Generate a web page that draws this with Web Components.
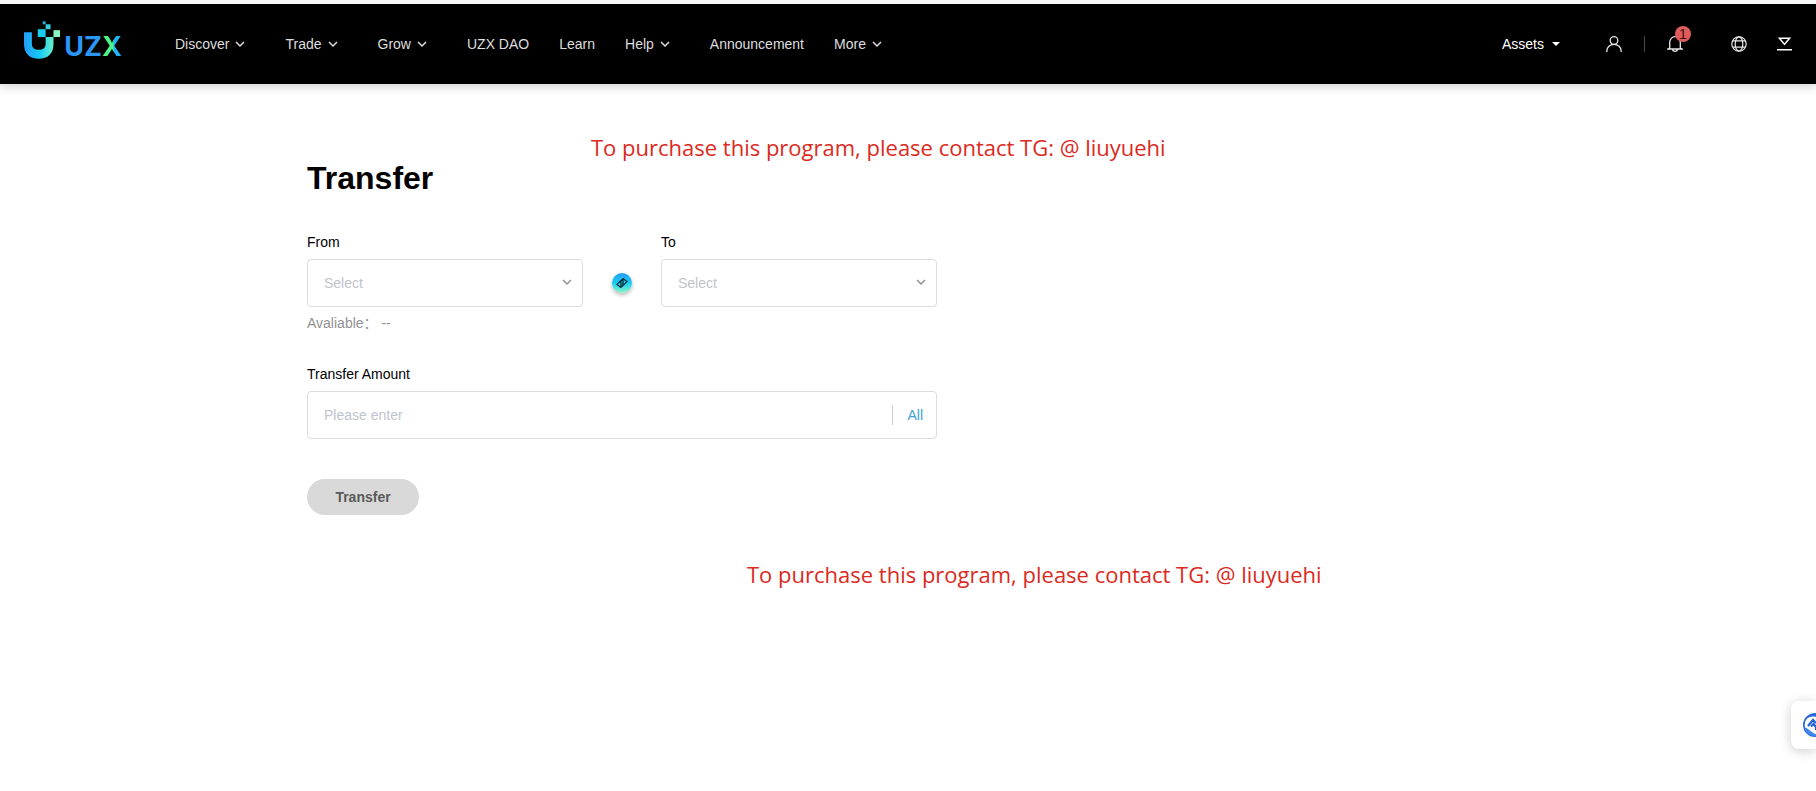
<!DOCTYPE html>
<html lang="en">
<head>
<meta charset="utf-8">
<title>Transfer - UZX</title>
<style>
html, body { margin: 0; }
body { background: #fff; font: 14px/20px "Liberation Sans", Arial, "Noto Sans CJK SC", sans-serif; color: #000; overflow-x: hidden; }
</style>
</head>
<body>
<uzx-app></uzx-app>
<script>
const define = (name, html) => customElements.define(name, class extends HTMLElement {
  constructor() {
    super();
    const t = document.createElement('template');
    t.innerHTML = html;
    this.attachShadow({ mode: 'open' }).append(t.content.cloneNode(true));
  }
});

define('uzx-logo', `
<style>
:host { display: block; flex: none; width: 98px; }
a { display: flex; align-items: flex-start; gap: 4px; height: 52px; text-decoration: none; }
svg { display: block; }
.word { display: flex; padding-top: 13px; font: 700 27px/32px Inter, sans-serif; color: #2a96f5; }
.x { background: linear-gradient(90deg, #4df58a 55%, #1fb4fa 60%); -webkit-background-clip: text; background-clip: text; color: transparent; }
</style>
<a href="#">
<svg width="37" height="44" viewBox="0 0 37 44" aria-hidden="true">
<defs><linearGradient id="g" x1="0" x2="1"><stop offset="0" stop-color="#239cf8"/><stop offset=".55" stop-color="#16cdf8"/><stop offset="1" stop-color="#6af0c8"/></linearGradient></defs>
<path d="M0 14H8V26C8 30 11 32 15 32C19 32 22 30 22 26V19H30V26C30 36 24 41 15 41C6 41 0 36 0 26Z" fill="url(#g)"/>
<path d="M14 11H22V19H14Z" fill="#19cbee"/><path d="M22 6H27V11H22Z" fill="#36cfdc"/><path d="M19 3H22V6H19Z" fill="#25b5dc"/><path d="M30 12H37V19H30Z" fill="#8af5c4"/>
</svg>
<span class="word">UZ<span class="x">X</span></span>
</a>`);

define('nav-item', `
<style>
:host { display: block; }
a { display: flex; align-items: center; gap: 6px; color: #dedede; text-decoration: none; white-space: nowrap; }
svg { display: none; margin-right: 10px; }
:host([menu]) svg { display: block; }
</style>
<a href="#"><slot></slot><svg width="10" height="8" viewBox="0 0 10 8" fill="none" stroke="#dedede" stroke-width="1.5" aria-hidden="true"><path d="M1 2L5 6L9 2"/></svg></a>`);

define('user-tools', `
<style>
:host { display: flex; align-items: center; }
a { display: flex; align-items: center; gap: 8px; color: #fff; text-decoration: none; }
button { display: block; position: relative; width: 16px; height: 16px; padding: 0; border: 0; background: none; cursor: pointer; }
button svg { display: block; fill: none; stroke: #e6e6e6; stroke-width: 1.3; }
.user { margin-left: 46px; }
i { width: 1px; height: 16px; margin: 0 22px; background: #4a4a4a; }
.globe { margin-left: 48px; }
.down { margin-left: 30px; }
.badge { position: absolute; left: 8px; top: -10px; width: 16px; height: 16px; border-radius: 8px; background: #e05c5c; color: #3a1010; font: 14px/16px "Liberation Sans", Arial, sans-serif; text-align: center; }
</style>
<a href="#">Assets<svg width="8" height="4" viewBox="0 0 8 4" aria-hidden="true"><path d="M0 0H8L4 4Z" fill="#fff"/></svg></a>
<button class="user" aria-label="Account"><svg width="16" height="16" viewBox="0 0 16 16"><circle cx="8" cy="4.5" r="3.8"/><path d="M.8 16V15A7.2 6.7 0 0 1 15.2 15V16"/></svg></button>
<i></i>
<button class="bell" aria-label="Notifications"><svg width="16" height="16" viewBox="0 0 16 16"><path d="M2.7 12V6.5A5.3 5.8 0 0 1 13.3 6.5V12L15 13H1ZM5.5 13.2C5.7 16 10.3 16 10.5 13.2"/></svg><span class="badge">1</span></button>
<button class="globe" aria-label="Language"><svg width="16" height="16" viewBox="0 0 16 16" style="stroke-width:1.2"><circle cx="8" cy="8" r="7.2"/><ellipse cx="8" cy="8" rx="3.8" ry="7.2"/><path d="M1.8 4.8H14.2M1.8 11.2H14.2"/></svg></button>
<button class="down" aria-label="Download"><svg width="16" height="16" viewBox="0 0 16 16" style="stroke:#fff;stroke-width:1.5"><path d="M2.4 2.2H12.6L7.5 8.4ZM0 13.8H15"/></svg></button>`);

define('site-header', `
<style>
:host { display: block; border-top: 4px solid #f7f7f7; box-shadow: 0 2px 10px rgba(0,0,0,.2); }
header { display: flex; align-items: center; height: 80px; padding: 0 23px 0 24px; background: #000; }
nav { display: flex; gap: 30px; margin-left: 53px; }
user-tools { margin-left: auto; }
</style>
<header>
<uzx-logo></uzx-logo>
<nav>
<nav-item menu>Discover</nav-item><nav-item menu>Trade</nav-item><nav-item menu>Grow</nav-item><nav-item>UZX DAO</nav-item><nav-item>Learn</nav-item><nav-item menu>Help</nav-item><nav-item>Announcement</nav-item><nav-item menu>More</nav-item>
</nav>
<user-tools></user-tools>
</header>`);

define('account-select', `
<style>
:host { display: block; flex: 1; }
label { display: block; margin-bottom: 7px; }
.box { display: grid; align-items: center; }
.box > * { grid-area: 1 / 1; }
select { appearance: none; box-sizing: border-box; width: 100%; height: 48px; margin: 0; padding: 0 16px; border: 1px solid #dcdcdf; border-radius: 4px; background: #fff; color: #c0c4cc; font: inherit; }
svg { justify-self: end; margin: 0 11px 2px 0; pointer-events: none; }
</style>
<label for="s"><slot></slot></label>
<div class="box"><select id="s"><option>Select</option></select>
<svg width="10" height="8" viewBox="0 0 10 8" fill="none" stroke="#8b8e95" stroke-width="1.4" aria-hidden="true"><path d="M1 2L5 6L9 2"/></svg></div>`);

define('swap-button', `
<style>
:host { display: block; }
button { display: block; width: 20px; height: 20px; padding: 0; border: 0; border-radius: 10px; background: linear-gradient(#239df6, #18cdf3 50%, #8ff5c6); box-shadow: 0 2px 4px rgba(0,0,0,.3); cursor: pointer; }
svg { display: block; }
</style>
<button aria-label="Swap accounts"><svg width="20" height="20" viewBox="0 0 20 20" fill="none" stroke="#08303c" stroke-width="1.3"><path d="M9 15V7.6L5 11.4L9 14.6M11 5V12.4L15 8.6L11 5.4M9 7.6L11 6.2M9 13.8L11 12.4"/></svg></button>`);

define('amount-field', `
<style>
:host { display: block; }
label { display: block; margin-bottom: 7px; }
.box { box-sizing: border-box; display: flex; align-items: center; height: 48px; padding-right: 13px; border: 1px solid #dcdcdf; border-radius: 4px; }
input { flex: 1; min-width: 0; padding: 0 16px; border: 0; outline: 0; background: none; font: inherit; }
input::placeholder { color: #c0c4cc; }
button { height: 20px; padding: 0 0 0 14px; border: 0; border-left: 1px solid #ccc; background: none; color: #409eda; font: inherit; cursor: pointer; }
</style>
<label for="a">Transfer Amount</label>
<div class="box"><input id="a" type="text" placeholder="Please enter"><button>All</button></div>`);

define('transfer-form', `
<style>
:host { display: block; max-width: 1202px; margin: 0 auto; }
h1 { margin: 0 0 34px; font-size: 32px; line-height: 40px; }
.form { max-width: 630px; }
.row { display: flex; align-items: flex-end; }
swap-button { margin: 0 29px 14px; }
p { margin: 6px 0 31px; color: #929292; white-space: nowrap; }
.submit { display: block; width: 112px; height: 36px; margin-top: 40px; padding: 0; border: 0; border-radius: 18px; background: #d9d9d9; color: #5a5a5a; font: bold 14px/36px "Liberation Sans", Arial, sans-serif; }
</style>
<h1>Transfer</h1>
<div class="form">
<div class="row"><account-select>From</account-select><swap-button></swap-button><account-select>To</account-select></div>
<p>Avaliable： --</p>
<amount-field></amount-field>
<button class="submit">Transfer</button>
</div>`);

define('contact-note', `
<style>
:host { position: absolute; font: 22px/32px "Open Sans", "Noto Sans", sans-serif; color: #dc2a1e; white-space: nowrap; }
</style>
<slot></slot>`);

define('side-widget', `
<style>
:host { position: fixed; right: 0; top: 701px; }
button { display: block; width: 25px; height: 48px; padding: 0 0 0 12px; border: 0; border-radius: 8px 0 0 8px; background: #fff; box-shadow: 0 2px 12px rgba(0,0,0,.2); overflow: hidden; }
svg { display: block; }
</style>
<button aria-label="Assistant"><svg width="24" height="24" viewBox="0 0 24 24" fill="none"><circle cx="12" cy="12" r="11.2" stroke="#2c68d8" stroke-width="1.6"/><path d="M1 14C7 16 9 21 17 22.5C8 25 2 20 1 14Z" fill="#3f86ee"/><path d="M3 6C6 1 12 0 17 2L13 4C9 3 6 4 3 6Z" fill="#2c68d8"/><path d="M5 13L10 7L13 10M8 13.5L10.5 11L13 14V17" stroke="#2462d4" stroke-width="2.2"/></svg></button>`);

define('uzx-app', `
<style>
:host { display: block; position: relative; }
main { padding: 74px 24px 100px; }
.first { left: 591px; top: 131px; }
.second { left: 747px; top: 558px; }
</style>
<site-header></site-header>
<main><transfer-form></transfer-form></main>
<contact-note class="first">To purchase this program, please contact TG: @ liuyuehi</contact-note>
<contact-note class="second">To purchase this program, please contact TG: @ liuyuehi</contact-note>
<side-widget></side-widget>`);
</script>
</body>
</html>
